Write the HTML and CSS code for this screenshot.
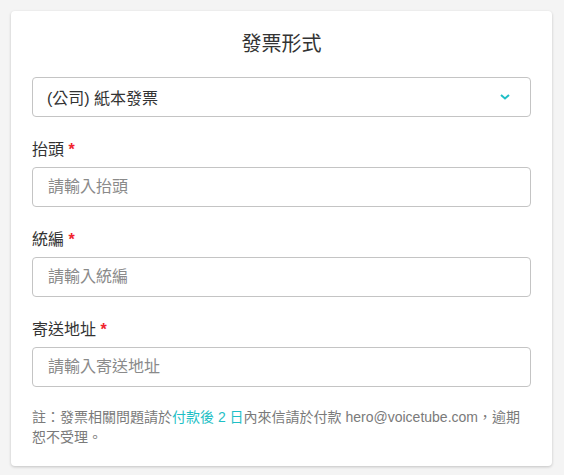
FILE: index.html
```html
<!DOCTYPE html>
<html lang="zh-Hant">
<head>
    <meta charset="UTF-8">
    <meta name="viewport" content="width=device-width, initial-scale=1.0">
    <title>發票形式</title>
    <link rel="stylesheet" href="styles.css">
</head>
<body>
    <div class="invoice-card">
        <div class="card-title">發票形式</div>

        <!-- Invoice type -->
        <div class="select-box">
            <span>(公司) 紙本發票</span>
            <svg class="chevron" width="10" height="6" viewBox="0 0 10 6">
                <path d="M1 1 L5 4.5 L9 1" fill="none" stroke="#1fbfc6" stroke-width="2"/>
            </svg>
        </div>

        <div class="field">
            <div class="field-label">抬頭 <span class="required">*</span></div>
            <input class="field-input" type="text" placeholder="請輸入抬頭">
        </div>

        <div class="field">
            <div class="field-label">統編 <span class="required">*</span></div>
            <input class="field-input" type="text" placeholder="請輸入統編">
        </div>

        <div class="field">
            <div class="field-label">寄送地址 <span class="required">*</span></div>
            <input class="field-input" type="text" placeholder="請輸入寄送地址">
        </div>

        <p class="note">
            註：發票相關問題請於<span class="highlight">付款後 2 日</span>內來信請於付款 hero@voicetube.com，逾期恕不受理。
        </p>
    </div>
</body>
</html>
```

FILE: styles.css
```css
* {
    margin: 0;
    padding: 0;
    box-sizing: border-box;
}

body {
    font-family: "Liberation Sans", "Noto Sans CJK TC", sans-serif;
    background-color: #f4f4f4;
    padding: 11px;
    color: #333;
}

.invoice-card {
    background: white;
    border-radius: 4px;
    box-shadow: 0 1px 3px rgba(0, 0, 0, 0.2);
    padding: 20px 21px 19px;
    width: 541px;
}

.card-title {
    text-align: center;
    font-size: 20px;
    line-height: 26px;
    margin-bottom: 20px;
    color: #333;
}

.select-box {
    display: flex;
    justify-content: space-between;
    align-items: center;
    height: 40px;
    border: 1px solid #c4c4c4;
    border-radius: 4px;
    padding: 0 20px 0 14px;
    font-size: 16px;
    color: #333;
}

.chevron {
    display: block;
}

.field {
    margin-top: 22px;
}

.field-label {
    font-size: 16px;
    line-height: 22px;
    margin-bottom: 6px;
    color: #333;
}

.required {
    color: #f0242e;
    font-weight: bold;
}

.field-input {
    display: block;
    width: 100%;
    height: 40px;
    border: 1px solid #c4c4c4;
    border-radius: 4px;
    padding: 0 15px;
    font-family: inherit;
    font-size: 16px;
    color: #333;
    outline: none;
}

.field-input::placeholder {
    color: #8a8a8a;
}

.note {
    margin-top: 20px;
    font-size: 14px;
    line-height: 20px;
    color: #7a7a7a;
}

.highlight {
    color: #1fbfc6;
}
```
